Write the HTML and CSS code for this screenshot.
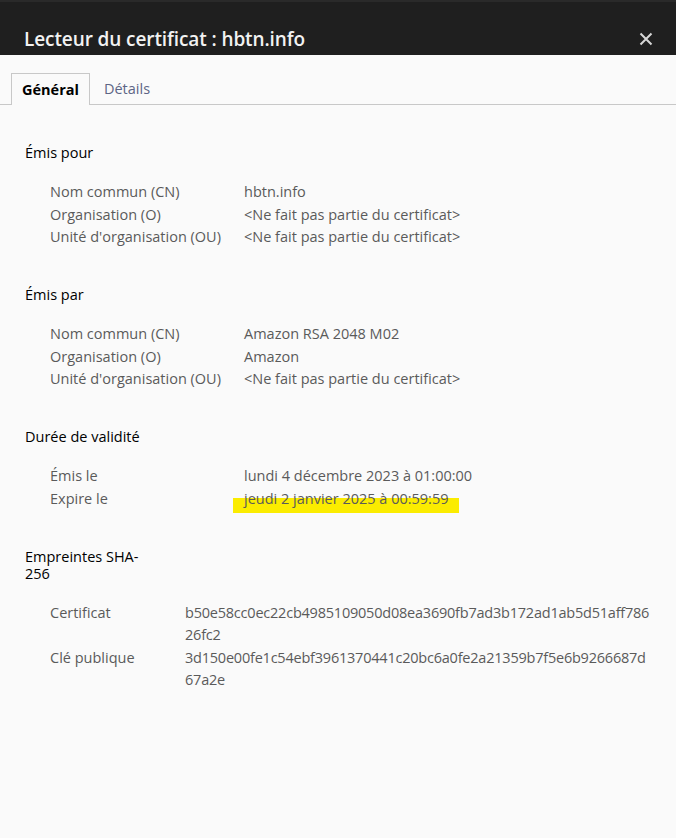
FILE: index.html
```html
<!DOCTYPE html>
<html lang="fr">
<head>
<meta charset="utf-8">
<title>Lecteur du certificat</title>
<link rel="stylesheet" href="styles.css">
</head>
<body>
<div class="dialog">
  <header class="header">
    <h1 class="title">Lecteur du certificat : hbtn.info</h1>
    <button class="close" aria-label="Fermer">
      <svg width="14" height="14" viewBox="0 0 14 14"><path d="M1.5 1.5 L12.5 12.5 M12.5 1.5 L1.5 12.5" stroke="#d6d6d6" stroke-width="2" fill="none"/></svg>
    </button>
  </header>
  <nav class="tabs">
    <div class="tab active">Général</div>
    <div class="tab">Détails</div>
  </nav>
  <main class="content">
    <section class="section">
      <h2 class="heading">Émis pour</h2>
      <div class="grid">
        <div class="label">Nom commun (CN)</div><div class="value">hbtn.info</div>
        <div class="label">Organisation (O)</div><div class="value">&lt;Ne fait pas partie du certificat&gt;</div>
        <div class="label">Unité d'organisation (OU)</div><div class="value">&lt;Ne fait pas partie du certificat&gt;</div>
      </div>
    </section>
    <section class="section">
      <h2 class="heading">Émis par</h2>
      <div class="grid">
        <div class="label">Nom commun (CN)</div><div class="value">Amazon RSA 2048 M02</div>
        <div class="label">Organisation (O)</div><div class="value">Amazon</div>
        <div class="label">Unité d'organisation (OU)</div><div class="value">&lt;Ne fait pas partie du certificat&gt;</div>
      </div>
    </section>
    <section class="section">
      <h2 class="heading">Durée de validité</h2>
      <div class="grid">
        <div class="label">Émis le</div><div class="value">lundi 4 décembre 2023 à 01:00:00</div>
        <div class="label">Expire le</div><div class="value"><span class="marked">jeudi 2 janvier 2025 à 00:59:59</span></div>
      </div>
    </section>
    <section class="section">
      <h2 class="heading narrow">Empreintes SHA-<wbr>256</h2>
      <div class="grid hashes">
        <div class="label">Certificat</div>
        <div class="value hash"><span class="hline">b50e58cc0ec22cb4985109050d08ea3690fb7ad3b172ad1ab5d51aff786</span><span class="hline">26fc2</span></div>
        <div class="label">Clé publique</div>
        <div class="value hash"><span class="hline">3d150e00fe1c54ebf3961370441c20bc6a0fe2a21359b7f5e6b9266687d</span><span class="hline">67a2e</span></div>
      </div>
    </section>
  </main>
</div>
</body>
</html>
```

FILE: styles.css
```css
* { box-sizing: border-box; }
html, body {
  margin: 0;
  padding: 0;
  background: #fafafa;
}
body {
  font-family: "Open Sans", "Noto Sans", "Liberation Sans", sans-serif;
  color: #1a1a1a;
  width: 676px;
  height: 838px;
  overflow: hidden;
}
.header {
  height: 55px;
  background: #1f1f1f;
  border-top: 2px solid #2a2a2a;
  display: flex;
  align-items: flex-end;
  justify-content: space-between;
  padding: 0 23px 0 24px;
}
.title {
  margin: 0 0 3px 0;
  font-size: 19px;
  font-weight: 600;
  color: #f2f2f2;
  line-height: 26px;
  letter-spacing: -0.1px;
}
.close {
  background: none;
  border: none;
  padding: 0;
  margin: 0 0 9px 0;
  width: 14px;
  height: 14px;
  display: flex;
}
.tabs {
  margin-top: 18px;
  padding-left: 11px;
  border-bottom: 1px solid #c8c8c8;
  display: flex;
  height: 32px;
}
.tab {
  font-size: 14.5px;
  line-height: 31px;
  padding: 0 14px;
  color: #5d6585;
}
.tab.active {
  font-weight: 700;
  color: #000;
  border: 1px solid #c8c8c8;
  border-bottom: none;
  background: #fafafa;
  height: 32px;
  margin-bottom: -1px;
  padding: 0 10px;
}
.content {
  padding: 39px 0 0 25px;
}
.section {
  margin-bottom: 37.5px;
}
.heading {
  margin: 0 0 19.5px 0;
  font-size: 14.5px;
  font-weight: 400;
  line-height: 17.5px;
  color: #000;
}
.heading.narrow {
  width: 128px;
  margin-bottom: 19px;
}
.grid {
  display: grid;
  grid-template-columns: 194px 1fr;
  padding-left: 25px;
  font-size: 14.5px;
  line-height: 22.5px;
  color: #5a5a5a;
}
.grid.hashes {
  grid-template-columns: 135px 1fr;
}
.value {
  color: #5a5a5a;
}
.marked {
  position: relative;
  z-index: 0;
}
.marked::before {
  content: "";
  position: absolute;
  left: -11px;
  right: -10px;
  top: 9px;
  height: 15px;
  background: #fbec00;
  z-index: -1;
}
.hash {
  letter-spacing: -0.22px;
}
.hline {
  display: block;
  white-space: nowrap;
}
```
